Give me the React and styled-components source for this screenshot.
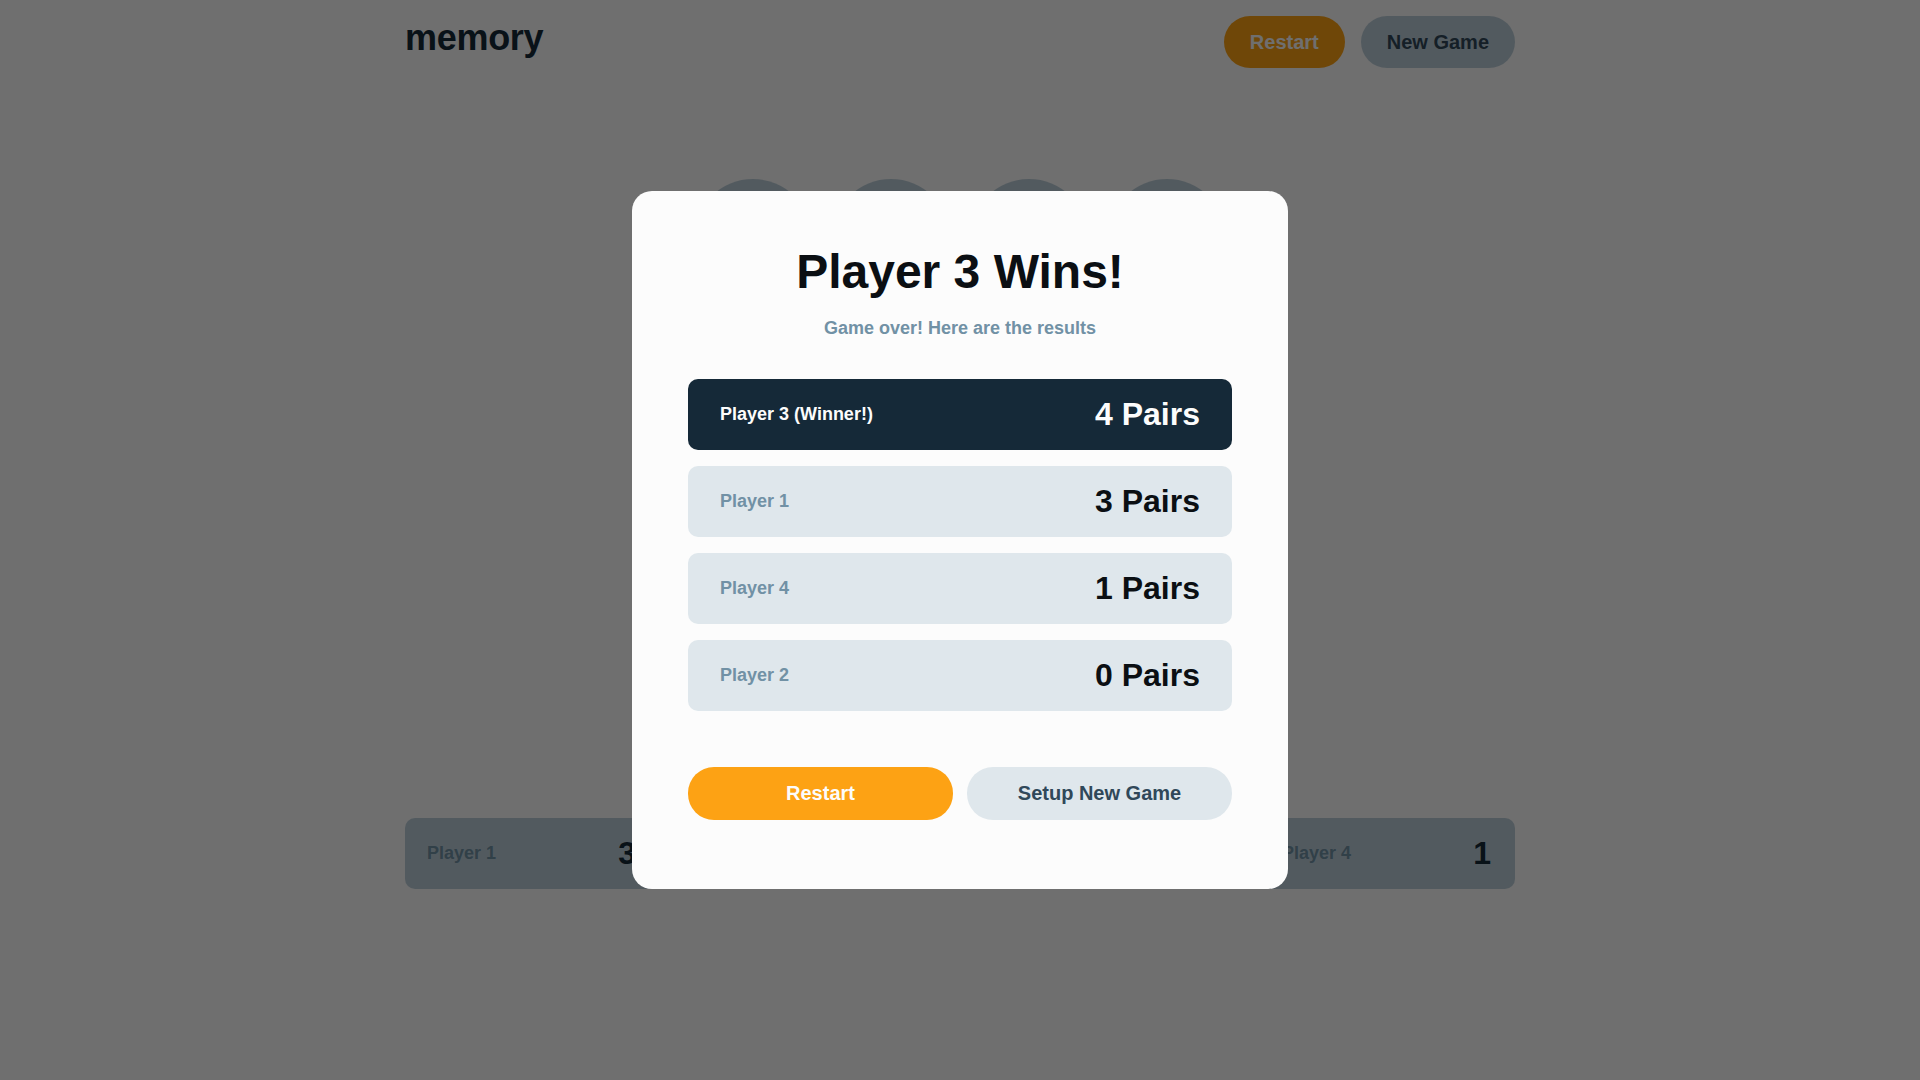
import React from 'react'
import styled, { createGlobalStyle } from 'styled-components'

const GlobalStyle = createGlobalStyle`
  * {
    box-sizing: border-box;
  }
  body {
    margin: 0;
    background-color: #fcfcfc;
    font-family: "Liberation Sans", Arial, sans-serif;
    font-weight: 700;
  }
`

const players = [
  { name: 'Player 1', pairs: 3 },
  { name: 'Player 2', pairs: 0 },
  { name: 'Player 3', pairs: 4, active: true },
  { name: 'Player 4', pairs: 1 }
]

const results = [
  { name: 'Player 3 (Winner!)', pairs: 4, winner: true },
  { name: 'Player 1', pairs: 3 },
  { name: 'Player 4', pairs: 1 },
  { name: 'Player 2', pairs: 0 }
]

const Page = styled.div`
  width: 1110px;
  margin: 0 auto;
  height: 1080px;
`

const Header = styled.header`
  display: flex;
  justify-content: space-between;
  align-items: flex-start;
  padding-top: 16px;

  h1 {
    margin: 4px 0 0;
    font-size: 36px;
    line-height: 36px;
    color: #152938;
    letter-spacing: -0.3px;
  }
`

const HeaderActions = styled.div`
  display: flex;
  gap: 16px;
`

const PillButton = styled.button`
  height: ${p => p.$height || 52}px;
  padding: 0 26px;
  border: none;
  border-radius: 26px;
  font-family: inherit;
  font-weight: 700;
  font-size: 20px;
  cursor: pointer;
  color: ${p => (p.$primary ? '#fcfcfc' : '#304859')};
  background-color: ${p => (p.$primary ? '#fda214' : p.$light ? '#dfe7ec' : '#bcced9')};
  flex: ${p => (p.$grow ? 1 : 'none')};
`

const Board = styled.div`
  display: grid;
  grid-template-columns: repeat(4, 118px);
  gap: 20px;
  justify-content: center;
  margin-top: 111px;
`

const Circle = styled.div`
  width: 118px;
  height: 118px;
  border-radius: 50%;
  background-color: #bcced9;
`

const PlayerBar = styled.div`
  display: flex;
  gap: 30px;
  margin-top: 107px;
`

const PlayerCard = styled.div`
  position: relative;
  flex: 1;
  height: 71px;
  padding: 0 24px 0 22px;
  border-radius: 10px;
  display: flex;
  justify-content: space-between;
  align-items: center;
  background-color: ${p => (p.$active ? '#fda214' : '#bcced9')};

  span {
    font-size: 18px;
    color: ${p => (p.$active ? '#fcfcfc' : '#7191a5')};
  }
  strong {
    font-size: 32px;
    color: ${p => (p.$active ? '#fcfcfc' : '#152938')};
  }

  &::before {
    content: '';
    display: ${p => (p.$active ? 'block' : 'none')};
    position: absolute;
    top: -18px;
    left: 50%;
    transform: translateX(-50%);
    border: 20px solid transparent;
    border-top: none;
    border-bottom: 18px solid #fda214;
  }
`

const Overlay = styled.div`
  position: fixed;
  inset: 0;
  background-color: rgba(0, 0, 0, 0.56);
  display: flex;
  align-items: center;
  justify-content: center;
`

const Modal = styled.div`
  width: 656px;
  padding: 51px 56px 69px;
  border-radius: 20px;
  background-color: #fcfcfc;
  text-align: center;

  h2 {
    margin: 0;
    font-size: 48px;
    line-height: 60px;
    color: #0b0f13;
  }
  p {
    margin: 15px 0 0;
    font-size: 18px;
    line-height: 22px;
    color: #7191a5;
  }
`

const ResultList = styled.div`
  display: flex;
  flex-direction: column;
  gap: 16px;
  margin-top: 40px;
`

const ResultRow = styled.div`
  height: 71px;
  padding: 0 32px;
  border-radius: 10px;
  display: flex;
  justify-content: space-between;
  align-items: center;
  background-color: ${p => (p.$winner ? '#152938' : '#dfe7ec')};

  span {
    font-size: 18px;
    color: ${p => (p.$winner ? '#fcfcfc' : '#7191a5')};
  }
  strong {
    font-size: 32px;
    color: ${p => (p.$winner ? '#fcfcfc' : '#0b0f13')};
  }
`

const ModalActions = styled.div`
  display: flex;
  gap: 14px;
  margin-top: 56px;
`

const App = () => {
  return (
    <>
      <GlobalStyle />
      <Page>
        <Header>
          <h1>memory</h1>
          <HeaderActions>
            <PillButton $primary>Restart</PillButton>
            <PillButton>New Game</PillButton>
          </HeaderActions>
        </Header>
        <Board>
          {Array.from({ length: 16 }).map((_, i) => <Circle key={i} />)}
        </Board>
        <PlayerBar>
          {players.map(p => (
            <PlayerCard key={p.name} $active={p.active}>
              <span>{p.name}</span>
              <strong>{p.pairs}</strong>
            </PlayerCard>
          ))}
        </PlayerBar>
      </Page>
      <Overlay>
        <Modal>
          <h2>Player 3 Wins!</h2>
          <p>Game over! Here are the results</p>
          <ResultList>
            {results.map(r => (
              <ResultRow key={r.name} $winner={r.winner}>
                <span>{r.name}</span>
                <strong>{r.pairs} Pairs</strong>
              </ResultRow>
            ))}
          </ResultList>
          <ModalActions>
            <PillButton $primary $grow $height={53}>Restart</PillButton>
            <PillButton $light $grow $height={53}>Setup New Game</PillButton>
          </ModalActions>
        </Modal>
      </Overlay>
    </>
  )
}

export default App
